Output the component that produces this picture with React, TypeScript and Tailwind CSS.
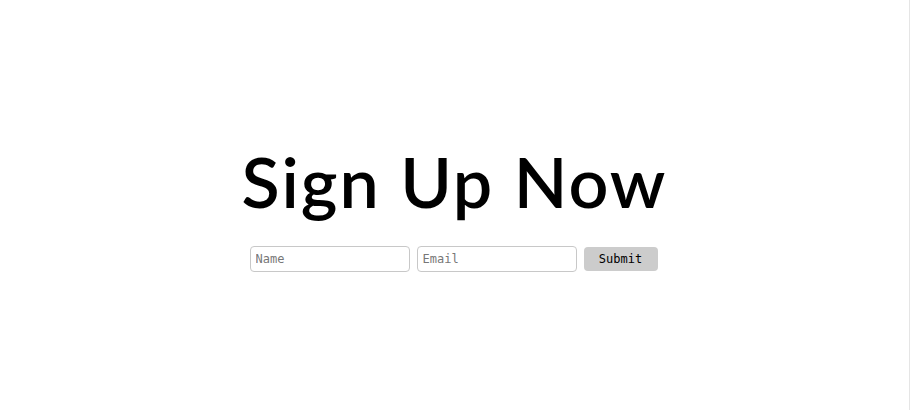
import React from "react";

const App = () => {
  return (
    <div className="w-[910px] h-[410px] bg-white border-r border-[#e5e5e5] flex flex-col items-center justify-center">
      <h1
        className="text-[70px] leading-none text-black font-semibold mt-[8px] tracking-[2px]"
        style={{ fontFamily: "Lato, 'Noto Sans', sans-serif" }}
      >
        Sign Up Now
      </h1>
      <form
        className="flex items-center gap-[7px] mt-[30px] mr-[2px]"
        style={{ fontFamily: "'DejaVu Sans Mono', 'Liberation Mono', monospace" }}
        onSubmit={(e) => e.preventDefault()}
      >
        <input
          type="text"
          placeholder="Name"
          className="w-[160px] h-[26px] px-[5px] text-[12px] border border-[#c8c8c8] rounded-[4px] placeholder:text-[#777] outline-none"
        />
        <input
          type="email"
          placeholder="Email"
          className="w-[160px] h-[26px] px-[5px] text-[12px] border border-[#c8c8c8] rounded-[4px] placeholder:text-[#777] outline-none"
        />
        <button
          type="submit"
          className="w-[74px] h-[24px] text-[12px] text-black bg-[#cccccc] rounded-[4px]"
        >
          Submit
        </button>
      </form>
    </div>
  );
};

export default App;
